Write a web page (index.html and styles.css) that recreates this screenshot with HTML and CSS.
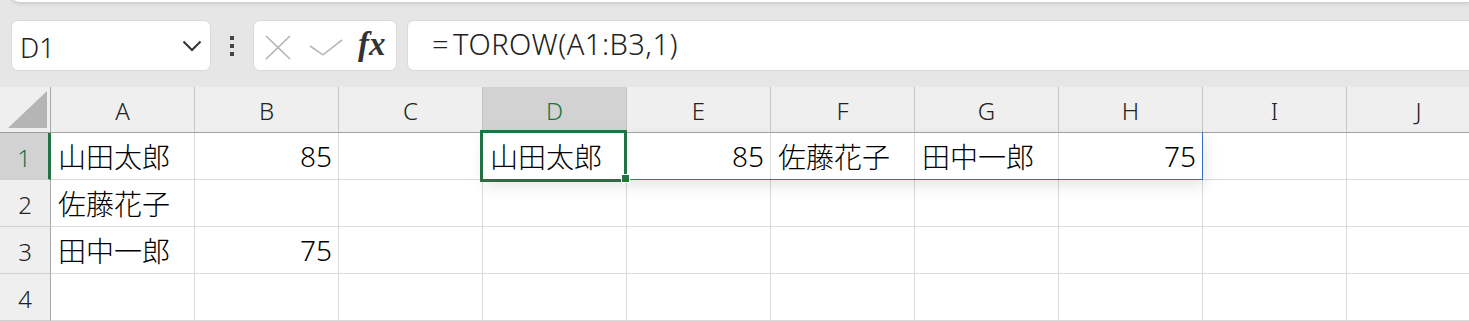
FILE: index.html
```html
<!DOCTYPE html>
<html lang="ja">
<head>
  <meta charset="UTF-8" />
  <meta name="viewport" content="width=device-width, initial-scale=1.0"/>
  <title>TOROW - Book1</title>
  <link rel="stylesheet" href="styles.css">
</head>
<body>
  <div class="ribbon"></div>

  <div class="formula-bar">
    <div class="name-box">
      <span>D1</span>
      <svg class="chevron" width="20" height="12" viewBox="0 0 20 12">
        <path d="M1.5 1.5 L10 10 L18.5 1.5" fill="none" stroke="#333" stroke-width="2"/>
      </svg>
    </div>
    <div class="grip"><i></i><i></i><i></i></div>
    <div class="fx-box">
      <svg class="x-icon" width="26" height="25" viewBox="0 0 26 25">
        <path d="M1 1 L25 24 M25 1 L1 24" stroke="#b3b3b3" stroke-width="1.6" fill="none"/>
      </svg>
      <svg class="ok-icon" width="34" height="17" viewBox="0 0 34 17">
        <path d="M1 7 L14 15.8 L33 1" stroke="#b8b8b8" stroke-width="1.6" fill="none"/>
      </svg>
      <span class="fx">fx</span>
    </div>
    <div class="formula"><span class="eq">=</span>TOROW(A1:B3,1)</div>
  </div>

  <div class="sheet">
    <div class="grid">
      <div class="corner"><span class="tri"></span></div>
      <div class="col-head">A</div>
      <div class="col-head">B</div>
      <div class="col-head">C</div>
      <div class="col-head sel">D</div>
      <div class="col-head">E</div>
      <div class="col-head">F</div>
      <div class="col-head">G</div>
      <div class="col-head">H</div>
      <div class="col-head">I</div>
      <div class="col-head">J</div>

      <div class="row-head sel">1</div>
      <div class="cell">山田太郎</div>
      <div class="cell num">85</div>
      <div class="cell"></div>
      <div class="cell">山田太郎</div>
      <div class="cell num">85</div>
      <div class="cell">佐藤花子</div>
      <div class="cell">田中一郎</div>
      <div class="cell num">75</div>
      <div class="cell"></div>
      <div class="cell"></div>

      <div class="row-head">2</div>
      <div class="cell">佐藤花子</div>
      <div class="cell"></div>
      <div class="cell"></div>
      <div class="cell"></div>
      <div class="cell"></div>
      <div class="cell"></div>
      <div class="cell"></div>
      <div class="cell"></div>
      <div class="cell"></div>
      <div class="cell"></div>

      <div class="row-head">3</div>
      <div class="cell">田中一郎</div>
      <div class="cell num">75</div>
      <div class="cell"></div>
      <div class="cell"></div>
      <div class="cell"></div>
      <div class="cell"></div>
      <div class="cell"></div>
      <div class="cell"></div>
      <div class="cell"></div>
      <div class="cell"></div>

      <div class="row-head">4</div>
      <div class="cell"></div>
      <div class="cell"></div>
      <div class="cell"></div>
      <div class="cell"></div>
      <div class="cell"></div>
      <div class="cell"></div>
      <div class="cell"></div>
      <div class="cell"></div>
      <div class="cell"></div>
      <div class="cell"></div>
    </div>

    <!-- spill range D1:H1 and active cell D1 -->
    <div class="spill"></div>
    <div class="active-cell"><span class="handle"></span></div>
  </div>
</body>
</html>
```

FILE: styles.css
```css
* {
  margin: 0; padding: 0;
  box-sizing: border-box;
}
body {
  background-color: #e6e6e6;
  font-family: 'Noto Sans', 'Noto Sans CJK JP', sans-serif;
  font-weight: 300;
  color: #000;
  overflow: hidden;
  height: 321px;
}

.ribbon {
  height: 10px;
  margin-top: -7px;
  margin-left: 10px;
  background-color: #fff;
  border-bottom: 1px solid #d2d2d2;
  border-bottom-left-radius: 10px;
  box-shadow: 0 1px 4px rgba(0,0,0,0.12);
}

.formula-bar {
  display: flex;
  align-items: center;
  height: 84px;
  padding: 17px 0 16px 11px;
}
.name-box {
  width: 200px;
  height: 51px;
  display: flex;
  align-items: center;
  justify-content: space-between;
  padding: 0 8px 0 8px;
  background-color: #fff;
  border: 1px solid #dadada;
  border-radius: 7px;
  font-size: 27px;
  color: #222;
}
.name-box span {
  padding-top: 3px;
}
.grip {
  width: 42px;
  display: flex;
  flex-direction: column;
  align-items: center;
  gap: 4px;
}
.grip i {
  width: 4px;
  height: 4px;
  background-color: #444;
}
.fx-box {
  width: 144px;
  height: 51px;
  display: flex;
  align-items: center;
  padding-left: 11px;
  background-color: #fff;
  border: 1px solid #dadada;
  border-radius: 7px;
}
.x-icon {
  margin-top: 4px;
}
.ok-icon {
  margin-left: 18px;
  margin-top: 4px;
}
.fx {
  font-family: 'Liberation Serif', 'DejaVu Serif', serif;
  font-style: italic;
  font-weight: bold;
  font-size: 33px;
  color: #333;
  margin-left: 15px;
  margin-top: -2px;
}
.formula {
  flex: 1;
  height: 51px;
  margin-left: 10px;
  margin-right: -10px;
  padding-left: 24px;
  display: flex;
  align-items: center;
  background-color: #fff;
  border: 1px solid #dadada;
  border-radius: 7px;
  font-size: 29px;
  letter-spacing: 0.5px;
  color: #222;
  padding-bottom: 4px;
}
.formula .eq {
  margin-right: 4px;
}

.sheet {
  position: relative;
  background-color: #fff;
}
.grid {
  display: grid;
  grid-template-columns: 51px repeat(10, 144px);
  grid-template-rows: 46px repeat(4, 47px);
}
.corner, .col-head, .row-head {
  background-color: #efefef;
  color: #222;
  font-size: 24px;
  display: flex;
  align-items: center;
  justify-content: center;
}
.corner {
  border-right: 1px solid #a8a8a8;
  border-bottom: 1px solid #a0a0a0;
  align-items: flex-end;
  justify-content: flex-end;
  padding: 0 3px 4px 0;
}
.tri {
  width: 39px;
  height: 37px;
  background-color: #b5b5b5;
  clip-path: polygon(100% 0, 100% 100%, 0 100%);
}
.col-head {
  border-right: 1px solid #c4c4c4;
  border-bottom: 1px solid #a0a0a0;
  padding-top: 2px;
}
.row-head {
  border-right: 1px solid #a8a8a8;
  border-bottom: 1px solid #d0d0d0;
  padding-top: 2px;
}
.col-head.sel, .row-head.sel {
  background-color: #d2d2d2;
  color: #217346;
}
.row-head.sel {
  border-right: 3px solid #217346;
}
.cell {
  border-right: 1px solid #dadada;
  border-bottom: 1px solid #dadada;
  font-size: 28px;
  padding: 0 6px 0 7px;
  display: flex;
  align-items: center;
  white-space: nowrap;
}
.cell.num {
  justify-content: flex-end;
}

.spill {
  position: absolute;
  left: 482px;
  top: 45px;
  width: 721px;
  height: 48px;
  border: 1px solid #3a6fc8;
  border-top: none;
  box-shadow: 2px 6px 14px rgba(0,0,0,0.10);
  pointer-events: none;
}
.active-cell {
  position: absolute;
  left: 480px;
  top: 43px;
  width: 147px;
  height: 52px;
  border: 3px solid #217346;
}
.handle {
  position: absolute;
  right: -6px;
  bottom: -4px;
  width: 9px;
  height: 9px;
  background-color: #217346;
  border: 1px solid #fff;
}
```
